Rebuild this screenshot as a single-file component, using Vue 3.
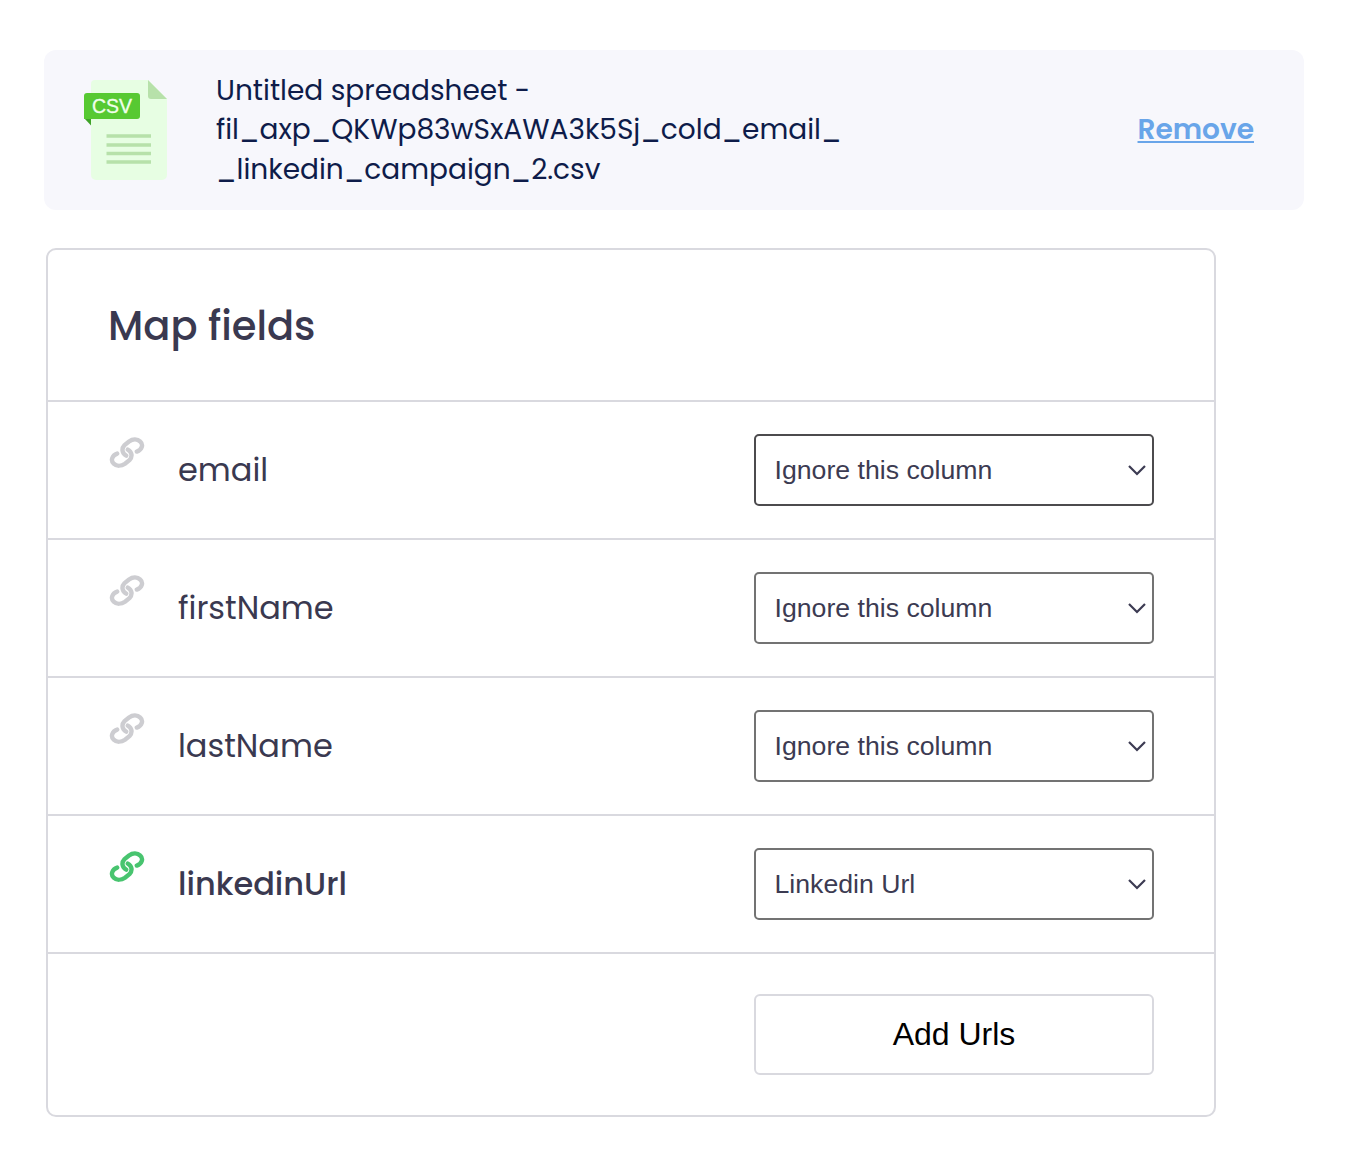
<script setup>
import { ref } from 'vue'

const options = ['Ignore this column', 'Linkedin Url']
const fields = ref([
  { name: 'email', value: 'Ignore this column', focused: true },
  { name: 'firstName', value: 'Ignore this column' },
  { name: 'lastName', value: 'Ignore this column' },
  { name: 'linkedinUrl', value: 'Linkedin Url', mapped: true },
])
</script>

<template>
  <main class="page">
    <section class="file">
      <svg class="csv" width="84" height="100" viewBox="0 0 84 100">
        <path d="M11 0H64L83 19V95a5 5 0 0 1-5 5H12a5 5 0 0 1-5-5V4a4 4 0 0 1 4-4z" fill="#e7fee3" />
        <path d="M64 0L83 19H67a3 3 0 0 1-3-3z" fill="#b7e1aa" />
        <path d="M0 38H7V45.500z" fill="#3fa328" />
        <path d="M3 13H53a3 3 0 0 1 3 3V36a3 3 0 0 1-3 3H0V16a3 3 0 0 1 3-3z" fill="#57c932" />
        <text x="8" y="33" class="csv-label">CSV</text>
        <path d="M22.500 56H67M22.500 65H67M22.500 73.500H67M22.500 82H67" stroke="#b7e1aa" stroke-width="3.300" />
      </svg>
      <div class="file-name">
        <div>Untitled spreadsheet -</div>
        <div>fil_axp_QKWp83wSxAWA3k5Sj_cold_email_</div>
        <div>_linkedin_campaign_2.csv</div>
      </div>
      <a class="remove">Remove</a>
    </section>

    <section class="panel">
      <header class="head"><h2>Map fields</h2></header>
      <div v-for="f in fields" :key="f.name" class="row" :class="{ mapped: f.mapped }">
        <svg class="link" width="36" height="34" viewBox="0 0 36 34">
          <g fill="none" stroke="currentColor" stroke-width="4.400" stroke-linecap="round">
            <path d="M27.800 14.600C33 12.800 34.600 7.600 31.300 4.600C28.300 1.700 23.600 2 20 4.500L15.600 8C12.200 11.600 13 16.200 17.200 18.600" />
            <path d="M27.800 14.600C33 12.800 34.600 7.600 31.300 4.600C28.300 1.700 23.600 2 20 4.500L15.600 8C12.200 11.600 13 16.200 17.200 18.600" transform="rotate(180 18 15.600)" />
          </g>
        </svg>
        <span class="name">{{ f.name }}</span>
        <div class="select" :class="{ focused: f.focused }">
          <select v-model="f.value">
            <option v-for="o in options" :key="o">{{ o }}</option>
          </select>
          <svg class="chevron" width="20" height="12" viewBox="0 0 20 12">
            <path d="M2 2L10 10L18 2" fill="none" stroke="#3c3b52" stroke-width="2.200" />
          </svg>
        </div>
      </div>
      <footer class="foot"><button type="button">Add Urls</button></footer>
    </section>
  </main>
</template>

<style>
body {
  background: #fff;
}
</style>

<style scoped>
.page {
  box-sizing: border-box;
  height: 1166px;
  padding: 50px 55px 0 44px;
  font-family: Poppins, Inter, sans-serif;
  color: #3a3950;
}
.file {
  box-sizing: border-box;
  display: flex;
  align-items: center;
  height: 160px;
  padding: 0 50px 0 40px;
  border-radius: 12px;
  background: #f7f7fc;
}
.csv {
  flex: none;
}
.csv-label {
  font: 19.500px 'Liberation Sans', Arial, sans-serif;
  fill: #f0ffeb;
  stroke: #f0ffeb;
  stroke-width: 0.300px;
}
.file-name {
  flex: 1;
  margin-left: 48px;
  font-size: 28px;
  line-height: 39.600px;
  color: #0e1c4a;
  white-space: nowrap;
}
.remove {
  font-size: 28px;
  font-weight: 600;
  color: #69a5e9;
  text-decoration: underline;
  text-decoration-thickness: 2px;
  text-underline-offset: 2px;
}
.panel {
  box-sizing: border-box;
  width: 1170px;
  height: 869px;
  margin: 38px 0 0 2px;
  border: 2px solid #d9d9df;
  border-radius: 10px;
}
.head {
  box-sizing: border-box;
  display: flex;
  align-items: center;
  height: 150px;
  padding: 2px 0 0 60px;
}
h2 {
  margin: 0;
  font-size: 40px;
  font-weight: 500;
}
.row {
  display: flex;
  align-items: center;
  height: 136px;
  padding: 0 60px;
  border-top: 2px solid #d9d9df;
}
.link {
  align-self: flex-start;
  margin: 35px 33px 0 1px;
  color: #cdcdd1;
}
.mapped .link {
  color: #48c46f;
}
.name {
  flex: 1;
  font-size: 32px;
}
.mapped .name {
  font-weight: 500;
}
.select {
  position: relative;
  width: 400px;
  height: 72px;
}
select {
  appearance: none;
  box-sizing: border-box;
  width: 100%;
  height: 100%;
  padding: 0 18.500px;
  border: 2px solid #737373;
  border-radius: 5px;
  background: #fff;
  font: 26.667px 'Liberation Sans', Arial, sans-serif;
  color: #3c3b52;
}
.focused select {
  border-color: #4c4b4e;
}
.chevron {
  position: absolute;
  top: 30px;
  right: 7px;
  pointer-events: none;
}
.foot {
  display: flex;
  justify-content: flex-end;
  padding: 40px 60px 0 0;
  border-top: 2px solid #d9d9df;
}
button {
  box-sizing: border-box;
  width: 400px;
  height: 81px;
  padding: 0;
  border: 2px solid #d9d9df;
  border-radius: 6px;
  background: #fff;
  font: 32px 'Liberation Sans', Arial, sans-serif;
  color: #000;
}
</style>
